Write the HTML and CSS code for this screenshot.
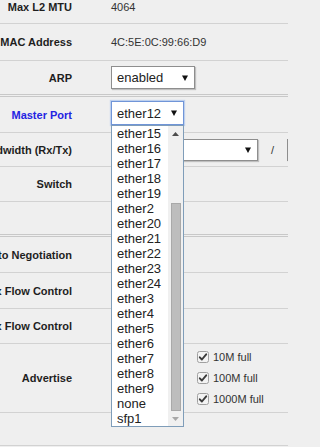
FILE: index.html
```html
<!DOCTYPE html>
<html>
<head>
<meta charset="utf-8">
<link rel="stylesheet" href="styles.css">
</head>
<body>
<div class="form">
  <div class="row h33">
    <div class="label"><span>Max L2 MTU</span></div>
    <div class="value">4064</div>
  </div>
  <div class="row h36">
    <div class="label"><span>MAC Address</span></div>
    <div class="value">4C:5E:0C:99:66:D9</div>
  </div>
  <div class="row h33 sep">
    <div class="label"><span>ARP</span></div>
    <div class="value">
      <div class="select arp"><span>enabled</span><svg class="arrow" viewBox="0 0 6 6"><path d="M0 0.5H6L3 6z"/></svg></div>
    </div>
  </div>
  <div class="row h35">
    <div class="label master"><span>Master Port</span></div>
    <div class="value top">
      <div class="select focus"><span>ether12</span><svg class="arrow" viewBox="0 0 6 6"><path d="M0 0.5H6L3 6z"/></svg></div>
    </div>
  </div>
  <div class="row h33">
    <div class="label"><span>Bandwidth (Rx/Tx)</span></div>
    <div class="value bwrow">
      <div class="select bw"><span></span><svg class="arrow" viewBox="0 0 6 6"><path d="M0 0.5H6L3 6z"/></svg></div>
      <span class="slash">/</span>
      <div class="select bw"><span></span><svg class="arrow" viewBox="0 0 6 6"><path d="M0 0.5H6L3 6z"/></svg></div>
    </div>
  </div>
  <div class="row h34">
    <div class="label"><span>Switch</span></div>
    <div class="value"></div>
  </div>
  <div class="row h32 sep">
    <div class="label"></div>
    <div class="value"></div>
  </div>
  <div class="row h35">
    <div class="label"><span>Auto Negotiation</span></div>
    <div class="value"></div>
  </div>
  <div class="row h35">
    <div class="label"><span>Rx Flow Control</span></div>
    <div class="value"></div>
  </div>
  <div class="row h34">
    <div class="label"><span>Tx Flow Control</span></div>
    <div class="value"></div>
  </div>
  <div class="row h68">
    <div class="label"><span>Advertise</span></div>
    <div class="value">
      <div class="checks">
        <div class="check"><svg class="cb" viewBox="0 0 12 12"><rect x="0.5" y="0.5" width="11" height="11" rx="2"/><path d="M2.8 6.3 L4.9 8.5 L9.2 3.3"/></svg><span>10M full</span></div>
        <div class="check"><svg class="cb" viewBox="0 0 12 12"><rect x="0.5" y="0.5" width="11" height="11" rx="2"/><path d="M2.8 6.3 L4.9 8.5 L9.2 3.3"/></svg><span>100M full</span></div>
        <div class="check"><svg class="cb" viewBox="0 0 12 12"><rect x="0.5" y="0.5" width="11" height="11" rx="2"/><path d="M2.8 6.3 L4.9 8.5 L9.2 3.3"/></svg><span>1000M full</span></div>
      </div>
    </div>
  </div>
  <div class="row h32">
    <div class="label"></div>
    <div class="value"></div>
  </div>
</div>

<div class="dropdown">
  <div class="options">
    <div>ether15</div>
    <div>ether16</div>
    <div>ether17</div>
    <div>ether18</div>
    <div>ether19</div>
    <div>ether2</div>
    <div>ether20</div>
    <div>ether21</div>
    <div>ether22</div>
    <div>ether23</div>
    <div>ether24</div>
    <div>ether3</div>
    <div>ether4</div>
    <div>ether5</div>
    <div>ether6</div>
    <div>ether7</div>
    <div>ether8</div>
    <div>ether9</div>
    <div>none</div>
    <div>sfp1</div>
  </div>
  <div class="scrollbar">
    <div class="sb-btn"><svg class="sb-up" viewBox="0 0 7 4"><path d="M0 4H7L3.5 0z"/></svg></div>
    <div class="sb-track"><div class="thumb"></div></div>
    <div class="sb-btn"><svg class="sb-down" viewBox="0 0 7 4"><path d="M0 0H7L3.5 4z"/></svg></div>
  </div>
</div>
</body>
</html>
```

FILE: styles.css
```css
html, body {
  margin: 0;
  padding: 0;
  background: #efefef;
  overflow: hidden;
}
body {
  width: 288px;
  height: 447px;
  position: relative;
  font-family: "Liberation Sans", Arial, sans-serif;
  font-size: 11px;
  color: #222;
}
.form {
  margin-top: -10px;
  width: 288px;
  overflow: hidden;
}
.row {
  display: flex;
  align-items: center;
  border-bottom: 1px solid #d2d2d2;
}
.row.sep {
  border-bottom: 3px double #c8c8c8;
}
.h32 { height: 32px; }
.h33 { height: 33px; }
.h34 { height: 34px; }
.h35 { height: 35px; }
.h36 { height: 36px; }
.h68 { height: 68px; }

.label {
  width: 72px;
  flex: none;
  display: flex;
  justify-content: flex-end;
  white-space: nowrap;
  font-weight: bold;
  color: #1e1e1e;
}
.label.master {
  color: #2424e2;
}
.value {
  margin-left: 39px;
  display: flex;
  align-items: center;
  white-space: nowrap;
  color: #333;
}
.value.top {
  align-self: flex-start;
  margin-top: 4px;
}

.select {
  box-sizing: border-box;
  height: 23px;
  background: #fff;
  border: 1px solid #8e8e8e;
  box-shadow: 1px 1px 1px rgba(0, 0, 0, 0.2);
  display: flex;
  align-items: center;
  justify-content: space-between;
  padding: 0 6px 0 5px;
  font-size: 13px;
  color: #222;
}
.select.arp {
  width: 84px;
}
.select.focus {
  width: 73px;
  height: 24px;
  border-color: #7095d8;
  box-shadow: 0 0 1px 1px rgba(130, 170, 235, 0.45);
}
.select.bw {
  width: 147px;
  height: 22px;
  flex: none;
}
.arrow {
  width: 6px;
  height: 6px;
  fill: #111;
  flex: none;
}
.bwrow {
  gap: 13px;
}
.slash {
  color: #333;
}

.checks {
  display: flex;
  flex-direction: column;
  padding-left: 86px;
}
.check {
  display: flex;
  align-items: center;
  gap: 4px;
  height: 21px;
  color: #333;
}
.cb {
  width: 12px;
  height: 12px;
  flex: none;
}
.cb rect {
  fill: #f3f3f3;
  stroke: #a0a0a0;
}
.cb path {
  fill: none;
  stroke: #3a3a3a;
  stroke-width: 1.9;
  stroke-linecap: round;
  stroke-linejoin: round;
}

.dropdown {
  position: absolute;
  left: 111px;
  top: 125px;
  width: 73px;
  height: 302px;
  box-sizing: border-box;
  border: 1px solid #7f9db9;
  background: #fff;
  display: flex;
}
.options {
  flex: 1;
  padding-left: 5px;
  font-size: 13px;
  line-height: 15px;
  color: #222;
}
.scrollbar {
  width: 15px;
  flex: none;
  background: #f0f0f0;
  display: flex;
  flex-direction: column;
}
.sb-btn {
  height: 15px;
  display: flex;
  align-items: center;
  justify-content: center;
}
.sb-up, .sb-down {
  width: 7px;
  height: 4px;
}
.sb-up { fill: #4c4c4c; }
.sb-down { fill: #a8a8a8; }
.sb-track {
  flex: 1;
  display: flex;
  flex-direction: column;
  justify-content: flex-end;
  padding: 0 2px 0 3px;
}
.thumb {
  height: 208px;
  box-sizing: border-box;
  background: #bdbdbd;
  border: 1px solid #a9a9a9;
}
```
